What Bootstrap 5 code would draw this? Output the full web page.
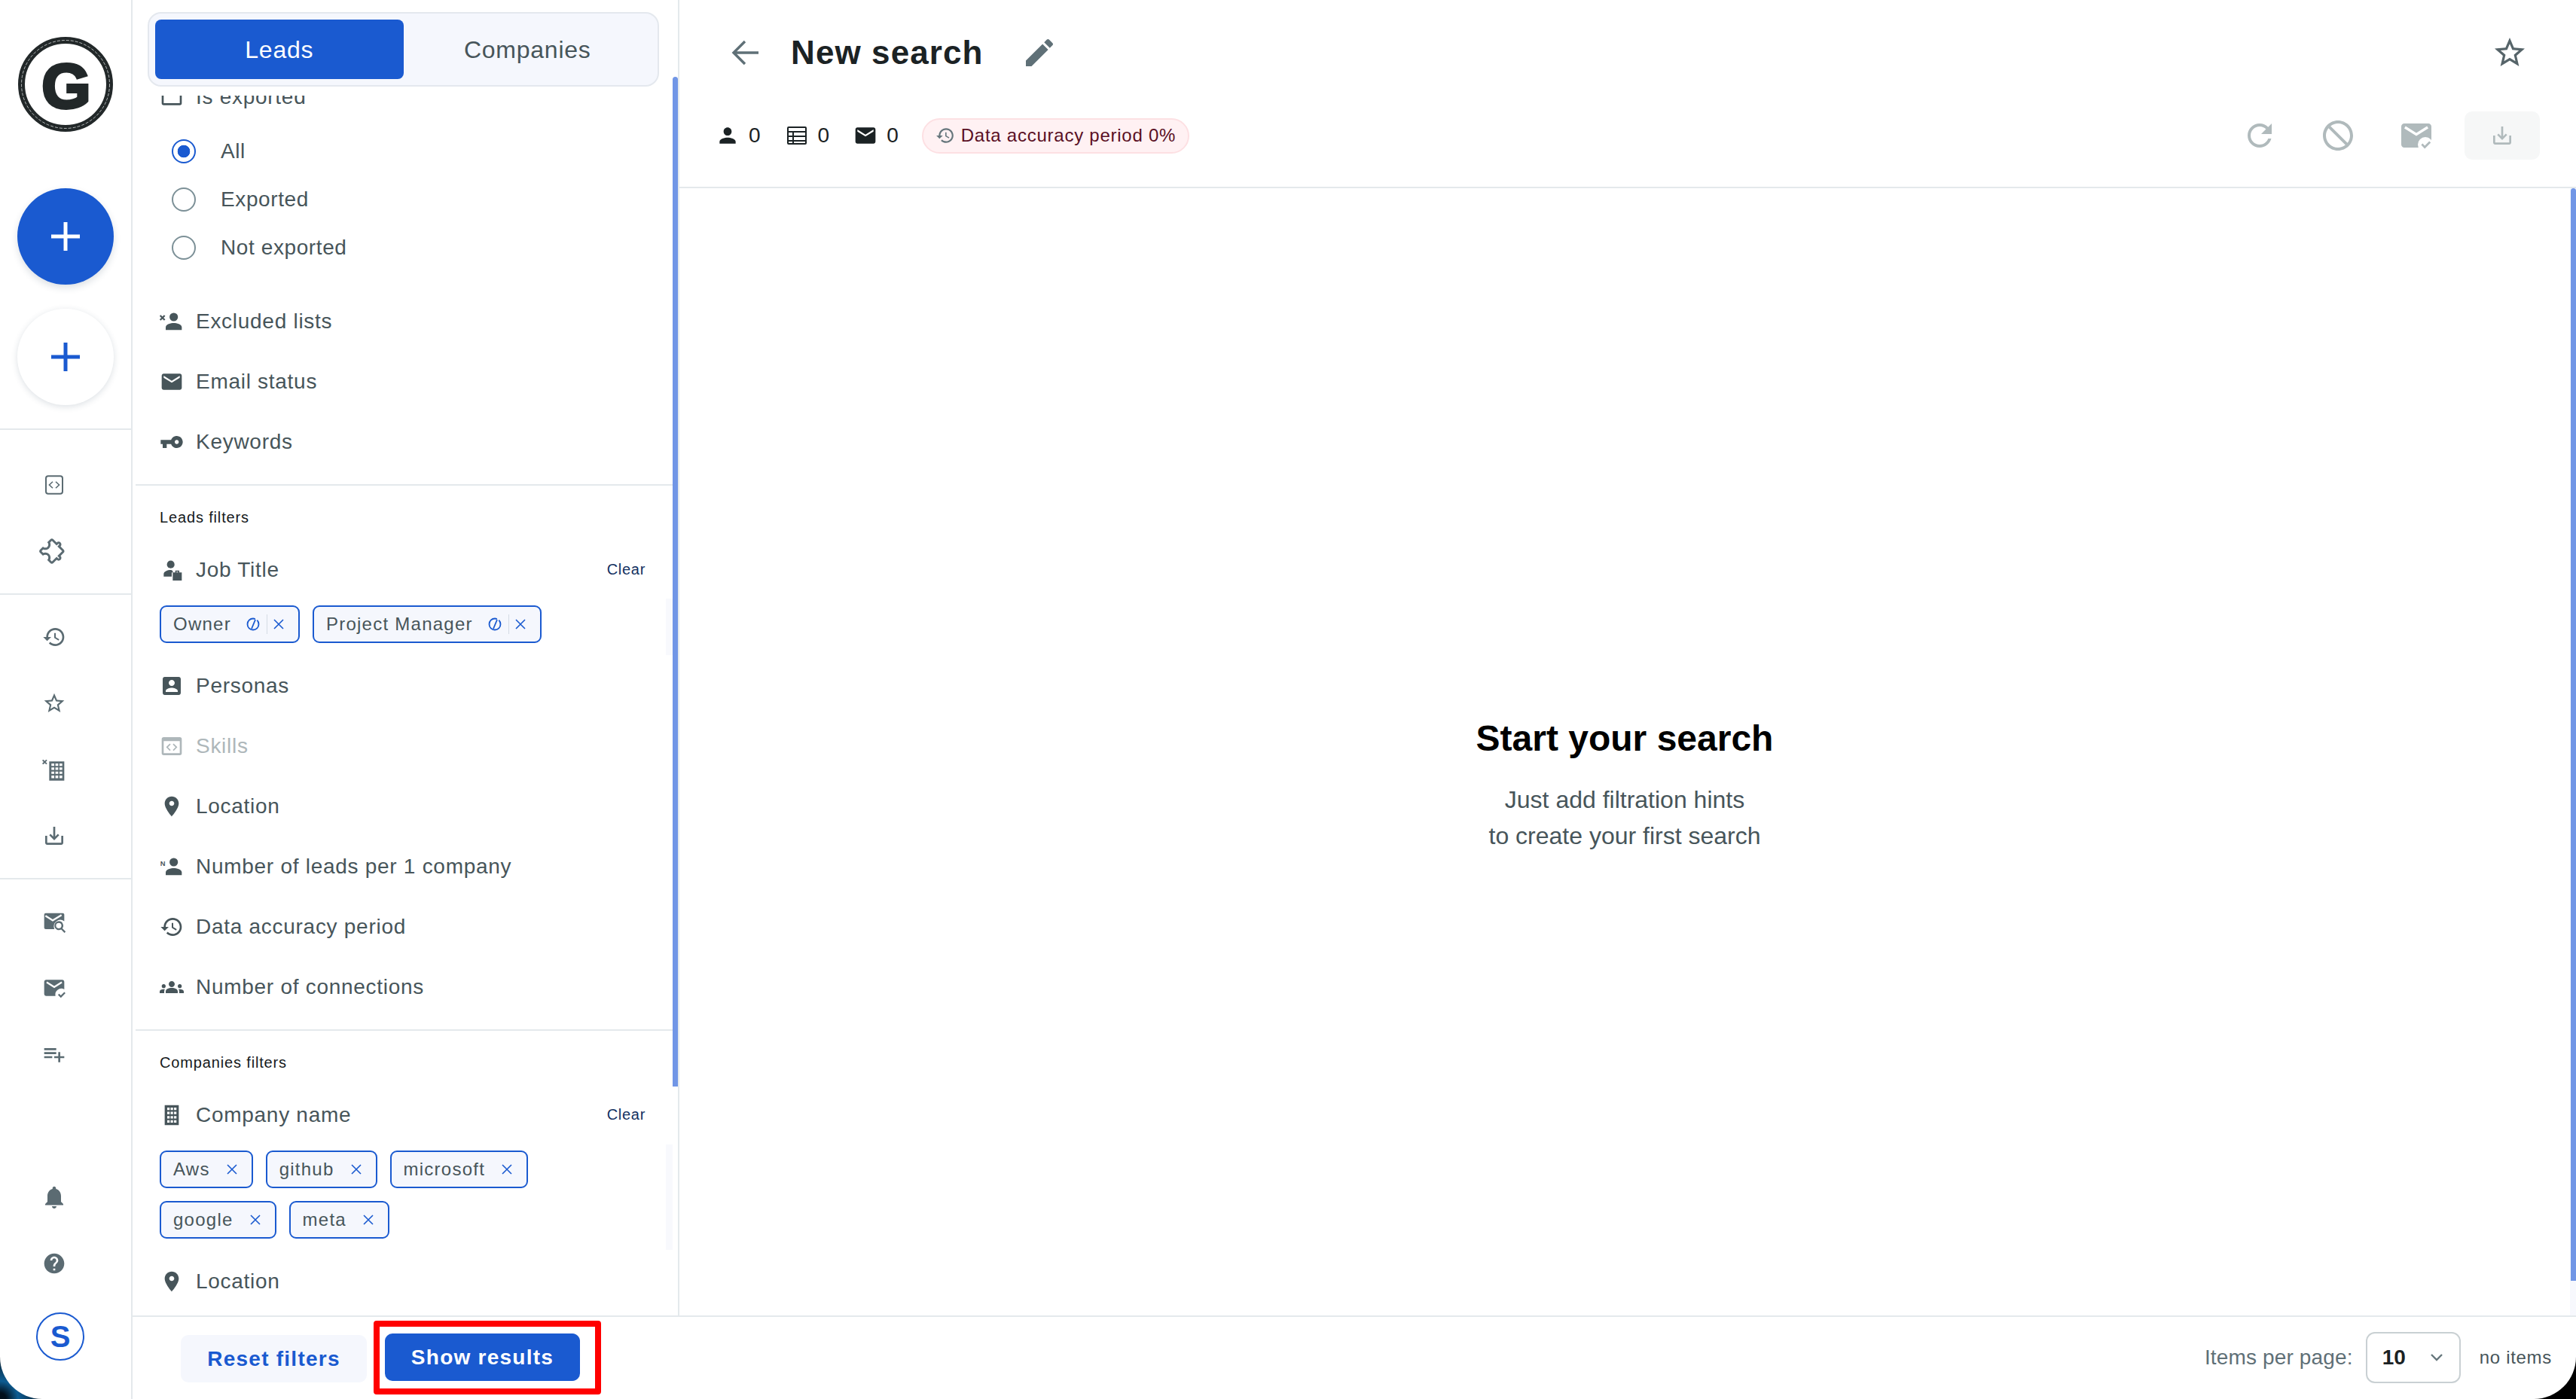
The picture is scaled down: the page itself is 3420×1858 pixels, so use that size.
<!DOCTYPE html>
<html lang="en">
<head>
    <meta charset="UTF-8">
    <meta name="viewport" content="width=device-width, initial-scale=1.0">
    <title>New search</title>
    <link href="https://cdn.jsdelivr.net/npm/bootstrap@5.3.0/dist/css/bootstrap.min.css" rel="stylesheet">
    <style>
        html, body { margin: 0; width: 3420px; height: 1858px; overflow: hidden; }
        body {
            background: radial-gradient(circle at 0 100%, #02101c 0 8px, #0d5c92 24px, #0a3350 44px, #000 60px) 0 100% / 90px 90px no-repeat, #000;
            font-family: "Liberation Sans", Arial, sans-serif;
            color: #47555a;
        }
        .app-shell { width: 3420px; height: 1858px; background: #fff; border-radius: 0 0 56px 56px; overflow: hidden; }

        /* left rail */
        .rail { width: 176px; height: 100%; border-right: 2px solid #e4e9ec; flex: none; }
        .rail-logo { margin: 49px 0 75px 24px; width: 126px; height: 126px; display: block; }
        .fab { width: 128px; height: 128px; margin-left: 23px; border-radius: 50%; border: 0; padding: 0; box-shadow: 0 4px 10px rgba(40, 60, 90, .16); }
        .fab-blue { background: #1a5ad0; color: #fff; margin-bottom: 32px; }
        .fab-white { background: #fff; color: #1a5ad0; margin-bottom: 31px; box-shadow: 0 2px 8px rgba(40, 60, 90, .16); }
        .rail-group { border-top: 2px solid #e4e9ec; padding: 12px 0; }
        .rail-group:first-of-type { padding-top: 29px; }
        .rail-item { height: 88px; padding-left: 56px; display: flex; align-items: center; color: #5b6b72; }
        .rail-item svg { width: 32px; height: 32px; fill: currentColor; overflow: visible; }
        .rail-item svg.bell-icon { width: 36px; height: 36px; margin-left: -2px; }
        .rail-bottom { margin-top: auto; padding-bottom: 51px; }
        .avatar { width: 64px; height: 64px; margin: 21px 0 0 48px; border: 2px solid #1a5ad0; border-radius: 50%; color: #1a5ad0; font-size: 40px; font-weight: 700; letter-spacing: 0; }

        /* filters */
        .workspace { width: 3244px; height: 100%; }
        .top-area { height: 1747px; }
        .filters { width: 724px; flex: none; position: relative; }
        .tabs-head { height: 127px; padding: 16px 25px 0 20px; }
        .tabs-box { height: 99px; background: #f5f7fd; border: 2px solid #e4e8ee; border-radius: 18px; padding: 8px; }
        .tabs-box .nav-link { height: 79px; border-radius: 8px; font-size: 32px; letter-spacing: .75px; color: #47555a; display: flex; align-items: center; justify-content: center; padding: 0; }
        .tabs-box .nav-link.active { background: #1a5ad0; color: #fff; }
        .filter-body { height: 1620px; overflow: hidden; }
        .filter-inner { margin-top: -38px; }
        .f-row { height: 80px; padding-left: 36px; display: flex; align-items: center; font-size: 28px; letter-spacing: .72px; color: #47555a; }
        .f-row svg { width: 32px; height: 32px; fill: currentColor; flex: none; margin-right: 16px; overflow: visible; }
        .f-row.f-off { color: #aeb7ba; }
        .radio-set { padding: 0 0 26px 52px; }
        .radio-line { height: 64px; margin: 0; padding: 0; display: flex; align-items: center; font-size: 28px; letter-spacing: .6px; }
        .radio-line .form-check-input { width: 32px; height: 32px; margin: 0 33px 0 0; float: none; border: 2px solid #7c9097; }
        .radio-line .form-check-input:checked { border-color: #1a5ad0; background-color: #fff; background-image: radial-gradient(circle, #1a5ad0 0 8px, #fff 8.6px); }
        .section-rule { height: 2px; background: #e4e9ec; margin: 16px 7px 0 4px; }
        .section-title { height: 28px; line-height: 28px; margin: 28px 0 16px 36px; font-size: 20px; letter-spacing: .85px; color: #15191b; }
        .clear-link { margin: -3px 43px 0 auto; font-size: 20px; letter-spacing: .7px; color: #12305f; text-decoration: none; }
        .chip-wrap { padding: 7px 60px 17px 36px; gap: 17px; }
        .tag-chip { height: 50px; padding: 0 18px 0 16px; border: 2px solid #1a5ad0; border-radius: 9px; background: #f5f7fd; font-size: 24px; letter-spacing: 1.25px; color: #47555a; display: inline-flex; align-items: center; }
        .tag-chip svg { flex: none; }
        .chip-x { width: 16px; height: 16px; margin-left: 21px; stroke: #1a5ad0; stroke-width: 1.6; fill: none; }
        .chip-sync { width: 18px; height: 20px; margin-left: 20px; stroke: #1a5ad0; stroke-width: 1.8; fill: none; }
        .chip-sep { width: 1px; height: 26px; background: #d5dbe4; margin: 0 -14px 0 9px; }
        .thumb { position: absolute; right: 0; width: 7px; background: #7196e6; border-radius: 4px 4px 0 0; }
        .thumb-left { top: 102px; height: 1341px; }
        .ghost-track { position: absolute; right: 7px; width: 9px; background: #f8f9fd; }

        /* main */
        .result-pane { flex: 1; border-left: 2px solid #e4e9ec; position: relative; }
        .result-head { height: 248px; border-bottom: 2px solid #e4e9ec; padding: 0 48px 0 48px; box-sizing: content-box; }
        .title-line { height: 140px; }
        .title-line h1 { margin: 0 0 0 43px; font-size: 44px; font-weight: 700; letter-spacing: 1.1px; color: #1b2224; }
        .back-arrow { margin-left: 21px; }
        .title-edit { margin-left: 50px; }
        .title-star { margin-right: 16px; }
        .stat-line { height: 80px; padding-top: 0; }
        .stat-item { font-size: 28px; color: #1b2224; letter-spacing: 0; margin-right: 34px; display: flex; align-items: center; }
        .stat-item svg { fill: #1b2224; flex: none; margin-right: 12px; }
        .accuracy-pill { height: 47px; padding: 0 16px 0 16px; background: #fff1f3; border: 2px solid #fde0e3; border-radius: 24px; font-size: 24px; letter-spacing: .75px; color: #5a0f24; display: inline-flex; align-items: center; margin-left: -3px; }
        .accuracy-pill svg { width: 26px; height: 26px; fill: #66767c; margin-right: 8px; }
        .tool-icon { fill: #b0babc; width: 48px; height: 48px; }
        .export-box { width: 100px; height: 64px; background: #f6f7f7; border-radius: 10px; }
        .empty-state { height: 1497px; padding: 90px 8px 0 0; }
        .empty-state h2 { font-size: 48px; font-weight: 700; color: #000; margin: 0 0 29px; letter-spacing: 0; line-height: 56px; }
        .empty-state p { font-size: 32px; line-height: 48px; margin: 0; letter-spacing: 0; color: #47555a; }
        .thumb-main { top: 250px; height: 1451px; }
        .main-track { position: absolute; right: 0; top: 250px; bottom: 0; width: 8px; background: #f7f8fd; }

        /* footer */
        .foot-bar { height: 111px; border-top: 2px solid #e4e9ec; }
        .reset-btn, .show-btn { height: 63px; border: 0; border-radius: 10px; font-size: 28px; font-weight: 700; letter-spacing: 1.25px; padding: 0; }
        .reset-btn { width: 247px; background: #f5f7fd; color: #1a5ad0; margin: 24px 9px 0 64px; }
        .reset-btn:hover { background: #f5f7fd; color: #1a5ad0; }
        .show-btn { width: 259px; background: #1a5ad0; color: #fff; }
        .show-btn:hover { background: #1a5ad0; color: #fff; }
        .red-mark { border: 8px solid #f00; border-radius: 4px; padding: 9px 20px 10px 7px; margin-top: 5px; }
        .per-page { margin: 20px 0 0 auto; padding-right: 32px; }
        .per-label { font-size: 28px; color: #5f7077; letter-spacing: .15px; margin-right: 17px; }
        .per-select { width: 126px; height: 68px; border: 2px solid #c9d0d3; border-radius: 12px; padding: 0 20px; font-size: 28px; font-weight: 700; color: #1b2224; margin-right: 25px; }
        .per-select svg { width: 20px; height: 12px; stroke: #66767c; stroke-width: 2.4; fill: none; }
        .no-items { font-size: 24px; letter-spacing: .7px; color: #47555a; }
    </style>
</head>
<body>
    <svg width="0" height="0" class="d-block position-absolute">
        <defs>
            <symbol id="i-person" viewBox="0 0 24 24"><path d="M12 12c2.21 0 4-1.79 4-4s-1.79-4-4-4-4 1.79-4 4 1.79 4 4 4zm0 2c-2.67 0-8 1.34-8 4v2h16v-2c0-2.66-5.33-4-8-4z"/></symbol>
            <symbol id="i-mail" viewBox="0 0 24 24"><path d="M20 4H4c-1.1 0-1.99.9-1.99 2L2 18c0 1.1.9 2 2 2h16c1.1 0 2-.9 2-2V6c0-1.1-.9-2-2-2zm0 4l-8 5-8-5V6l8 5 8-5v2z"/></symbol>
            <symbol id="i-history" viewBox="0 0 24 24"><path d="M13 3c-4.97 0-9 4.03-9 9H1l3.89 3.89.07.14L9 12H6c0-3.87 3.13-7 7-7s7 3.13 7 7-3.13 7-7 7c-1.93 0-3.68-.79-4.94-2.06l-1.42 1.42C8.27 19.99 10.51 21 13 21c4.97 0 9-4.03 9-9s-4.03-9-9-9zm-1 5v5l4.28 2.54.72-1.21-3.5-2.08V8H12z"/></symbol>
            <symbol id="i-star" viewBox="0 0 24 24"><path d="M22 9.24l-7.19-.62L12 2 9.19 8.63 2 9.24l5.46 4.73L5.82 21 12 17.27 18.18 21l-1.63-7.03L22 9.24zM12 15.4l-3.76 2.27 1-4.28-3.32-2.88 4.38-.38L12 6.1l1.71 4.04 4.38.38-3.32 2.88 1 4.28L12 15.4z"/></symbol>
            <symbol id="i-save" viewBox="0 0 24 24"><path d="M19 12v7H5v-7H3v7c0 1.1.9 2 2 2h14c1.1 0 2-.9 2-2v-7h-2zm-6 .67l2.59-2.58L17 11.5l-5 5-5-5 1.41-1.41L11 12.67V3h2z"/></symbol>
            <symbol id="i-place" viewBox="0 0 24 24"><path d="M12 2C8.13 2 5 5.13 5 9c0 5.25 7 13 7 13s7-7.75 7-13c0-3.87-3.13-7-7-7zm0 9.5c-1.38 0-2.5-1.12-2.5-2.5s1.12-2.5 2.5-2.5 2.5 1.12 2.5 2.5-1.12 2.5-2.5 2.5z"/></symbol>
            <symbol id="i-close" viewBox="0 0 16 16"><path d="M2 2l12 12M14 2L2 14"/></symbol>
            <symbol id="i-sync" viewBox="0 0 18 20"><circle cx="9" cy="10" r="7.5" stroke-dasharray="38 3"/><path d="M12 4l-5 12"/></symbol>
            <symbol id="i-chev" viewBox="0 0 20 12"><path d="M3 2l7 7 7-7"/></symbol>
            <symbol id="i-plus" viewBox="0 0 40 40"><path d="M20 1v38M1 20h38" stroke="currentColor" stroke-width="5" fill="none"/></symbol>
        </defs>
    </svg>

    <div class="app-shell d-flex">
        <aside class="rail d-flex flex-column">
            <svg class="rail-logo" viewBox="0 0 126 126">
                <circle cx="63" cy="63" r="58.5" fill="#fff" stroke="#222829" stroke-width="9"/>
                <circle cx="63" cy="63" r="58.5" fill="none" stroke="#d8dcdc" stroke-width=".8" stroke-dasharray="4 2"/>
                <text x="64" y="94" text-anchor="middle" font-family="Liberation Sans" font-weight="700" font-size="84" fill="#222829" stroke="#222829" stroke-width="4">G</text>
            </svg>
            <button type="button" class="fab fab-blue btn d-flex align-items-center justify-content-center"><svg width="40" height="40"><use href="#i-plus"/></svg></button>
            <button type="button" class="fab fab-white btn d-flex align-items-center justify-content-center"><svg width="40" height="40"><use href="#i-plus"/></svg></button>

            <div class="rail-group">
                <div class="rail-item"><svg viewBox="0 0 24 24"><path fill-rule="evenodd" d="M6 2.500h12a3 3 0 0 1 3 3v13a3 3 0 0 1-3 3H6a3 3 0 0 1-3-3v-13a3 3 0 0 1 3-3zm0 1.500A1.500 1.500 0 0 0 4.500 5.500v13A1.500 1.500 0 0 0 6 20h12a1.500 1.500 0 0 0 1.500-1.500v-13A1.500 1.500 0 0 0 18 4z"/><path d="M10.500 8.800l-3.400 3.200 3.400 3.200" fill="none" stroke="currentColor" stroke-width="1.200"/><path d="M13.500 8.800l3.400 3.200-3.400 3.200" fill="none" stroke="currentColor" stroke-width="1.200"/></svg></div>
                <div class="rail-item"><svg viewBox="0 0 24 24"><g transform="rotate(45 12 12) translate(12 12) scale(1.12) translate(-12 -12)"><path d="M10.500 4.500c.28 0 .5.22.5.5v2h6v6h2c.28 0 .5.22.5.5s-.22.5-.5.5h-2v6h-2.120c-.68-1.750-2.390-3-4.380-3s-3.700 1.250-4.380 3H4v-2.120c1.750-.68 3-2.390 3-4.380 0-1.990-1.240-3.700-2.990-4.380L4 7h6V5c0-.28.22-.5.5-.5m0-2C9.120 2.500 8 3.620 8 5H4c-1.100 0-1.990.9-1.990 2v3.800h.29c1.490 0 2.700 1.210 2.700 2.700s-1.210 2.700-2.700 2.700H2V20c0 1.100.9 2 2 2h3.800v-.3c0-1.490 1.210-2.700 2.700-2.700s2.700 1.210 2.700 2.700v.3H17c1.100 0 2-.9 2-2v-4c1.380 0 2.500-1.120 2.500-2.500S20.380 11 19 11V7c0-1.100-.9-2-2-2h-4c0-1.380-1.120-2.500-2.500-2.500z"/></g></svg></div>
            </div>
            <div class="rail-group">
                <div class="rail-item"><svg><use href="#i-history"/></svg></div>
                <div class="rail-item"><svg><use href="#i-star"/></svg></div>
                <div class="rail-item"><svg viewBox="0 0 24 24"><path fill-rule="evenodd" d="M7 4h15v19H7zm2.200 2v2.400h2.800V6zm4 0v2.400h2.800V6zm4 0v2.400h2.800V6zM9.200 10v2.400h2.800V10zm4 0v2.400h2.800V10zm4 0v2.400h2.800V10zM9.200 14v2.400h2.800V14zm4 0v2.400h2.800V14zm4 0v2.400h2.800V14zM9.200 18v2.600h2.800V18zm4 0v2.600h2.800V18zm4 0v2.600h2.800V18z"/><path d="M.5 2.500l4 4m0-4l-4 4" fill="none" stroke="currentColor" stroke-width="1.500"/></svg></div>
                <div class="rail-item"><svg><use href="#i-save"/></svg></div>
            </div>
            <div class="rail-group border-bottom-0">
                <div class="rail-item"><svg viewBox="0 0 24 24"><path d="M3.500 3.500h17c.8 0 1.500.7 1.500 1.500v6.600a6.500 6.500 0 0 0-9.800 7.900H3.500c-.8 0-1.500-.7-1.500-1.500V5c0-.8.7-1.500 1.500-1.500zM2.800 7l7.700 4.800 9.200-5.600-.9-1.500-8.300 5-6.800-4.200z"/><path fill-rule="evenodd" d="M16.500 11.500a4.500 4.500 0 0 1 3.600 7.200l3.300 3.300-1.200 1.200-3.300-3.300a4.500 4.500 0 1 1-2.400-8.400zm0 1.800a2.700 2.700 0 1 0 0 5.400 2.700 2.700 0 0 0 0-5.400z"/></svg></div>
                <div class="rail-item"><svg viewBox="0 0 24 24"><path d="M4 4h16c1.100 0 2 .9 2 2v7.500a6 6 0 0 0-8.800 6.500H4c-1.100 0-2-.9-2-2V6c0-1.100.9-2 2-2zm0 3.200l8 5 8-5-.9-1.500-7.100 4.500-7.100-4.500z"/><path d="M15.700 19l1.200-1.200 1.700 1.700 3.400-3.400 1.200 1.200-4.600 4.600z"/></svg></div>
                <div class="rail-item"><svg viewBox="0 0 24 24"><path d="M14 10H2v2h12v-2zm0-4H2v2h12V6zm4 8v-4h-2v4h-4v2h4v4h2v-4h4v-2h-4zM2 16h8v-2H2v2z"/></svg></div>
            </div>

            <div class="rail-bottom">
                <div class="rail-item"><svg class="bell-icon" viewBox="0 0 24 24"><path d="M12 22c1.100 0 2-.9 2-2h-4c0 1.100.89 2 2 2zm6-6v-5c0-3.070-1.640-5.640-4.500-6.320V4c0-.83-.67-1.500-1.500-1.500s-1.500.67-1.500 1.500v.68C7.630 5.360 6 7.920 6 11v5l-2 2v1h16v-1l-2-2z"/></svg></div>
                <div class="rail-item"><svg viewBox="0 0 24 24"><path d="M12 2C6.480 2 2 6.480 2 12s4.480 10 10 10 10-4.480 10-10S17.520 2 12 2zm1 17h-2v-2h2v2zm2.070-7.750l-.9.92C13.450 12.900 13 13.500 13 15h-2v-.5c0-1.100.45-2.100 1.170-2.830l1.240-1.260c.37-.36.59-.86.59-1.410 0-1.100-.9-2-2-2s-2 .9-2 2H8c0-2.210 1.790-4 4-4s4 1.790 4 4c0 .88-.36 1.680-.93 2.250z"/></svg></div>
                <div class="avatar d-flex align-items-center justify-content-center">S</div>
            </div>
        </aside>

        <div class="workspace d-flex flex-column">
            <div class="top-area d-flex">
                <section class="filters">
                    <div class="tabs-head">
                        <ul class="tabs-box nav nav-pills nav-justified flex-nowrap">
                            <li class="nav-item"><a class="nav-link active" href="#">Leads</a></li>
                            <li class="nav-item"><a class="nav-link" href="#">Companies</a></li>
                        </ul>
                    </div>
                    <div class="filter-body">
                        <div class="filter-inner">
                            <div class="f-row"><svg viewBox="0 0 24 24"><path fill-rule="evenodd" d="M4 4h16a2 2 0 0 1 2 2v12a2 2 0 0 1-2 2H4a2 2 0 0 1-2-2V6a2 2 0 0 1 2-2zm0 2v12h16V6z"/></svg>Is exported</div>
                            <div class="radio-set">
                                <label class="form-check radio-line"><input class="form-check-input" type="radio" name="exported" checked>All</label>
                                <label class="form-check radio-line"><input class="form-check-input" type="radio" name="exported">Exported</label>
                                <label class="form-check radio-line"><input class="form-check-input" type="radio" name="exported">Not exported</label>
                            </div>
                            <div class="f-row"><svg viewBox="0 0 24 24"><circle cx="14" cy="7.500" r="4.200"/><path d="M14 13.500c-2.800 0-8 1.300-8 4.100V20.500h16v-2.900c0-2.800-5.200-4.100-8-4.100z"/><path d="M.5 6l4.500 4.500m0-4.500l-4.500 4.500" fill="none" stroke="currentColor" stroke-width="1.700"/></svg>Excluded lists</div>
                            <div class="f-row"><svg><use href="#i-mail"/></svg>Email status</div>
                            <div class="f-row"><svg viewBox="0 0 24 24"><g transform="matrix(-1 0 0 1 24 0)"><path d="M12.650 10C11.830 7.670 9.610 6 7 6c-3.310 0-6 2.690-6 6s2.690 6 6 6c2.610 0 4.830-1.670 5.650-4H17v4h4v-4h2v-4H12.650zM7 14c-1.100 0-2-.9-2-2s.9-2 2-2 2 .9 2 2-.9 2-2 2z"/></g></svg>Keywords</div>
                            <div class="section-rule"></div>

                            <div class="section-title">Leads filters</div>
                            <div class="f-row"><svg viewBox="0 0 24 24"><circle cx="11" cy="6.500" r="3.800"/><path d="M11 12c-3.300 0-7 1.500-7 4v2.500h8V14.500h1.500c-.6-1.600-.9-2.500-2.500-2.500z"/><path fill-rule="evenodd" d="M15.500 12.500h4v2H22v8h-9v-8h2.500zm1.200 1.200v.8h1.600v-.8z"/></svg>Job Title<a class="clear-link" href="#">Clear</a></div>
                            <div class="chip-wrap d-flex flex-wrap">
                                <span class="tag-chip">Owner<svg class="chip-sync"><use href="#i-sync"/></svg><span class="chip-sep"></span><svg class="chip-x"><use href="#i-close"/></svg></span>
                                <span class="tag-chip">Project Manager<svg class="chip-sync"><use href="#i-sync"/></svg><span class="chip-sep"></span><svg class="chip-x"><use href="#i-close"/></svg></span>
                            </div>
                            <div class="f-row"><svg viewBox="0 0 24 24"><path d="M19 3H5c-1.110 0-2 .9-2 2v14c0 1.100.89 2 2 2h14c1.100 0 2-.9 2-2V5c0-1.100-.9-2-2-2zm-7 3c1.650 0 3 1.350 3 3s-1.350 3-3 3-3-1.350-3-3 1.350-3 3-3zm6 12H6v-1c0-2 4-3.100 6-3.100s6 1.100 6 3.100v1z"/></svg>Personas</div>
                            <div class="f-row f-off"><svg viewBox="0 0 24 24"><path fill-rule="evenodd" d="M4 3h16a2 2 0 0 1 2 2v14a2 2 0 0 1-2 2H4a2 2 0 0 1-2-2V5a2 2 0 0 1 2-2zm0 4v12h16V7z"/><path d="M10.500 9.800l-3.200 3.200 3.200 3.200M13.500 9.800l3.200 3.200-3.200 3.200" fill="none" stroke="currentColor" stroke-width="1.300"/></svg>Skills</div>
                            <div class="f-row"><svg><use href="#i-place"/></svg>Location</div>
                            <div class="f-row"><svg viewBox="0 0 24 24"><circle cx="14" cy="7.500" r="4.200"/><path d="M14 13.500c-2.800 0-8 1.300-8 4.100V20.500h16v-2.900c0-2.800-5.200-4.100-8-4.100z"/><text x="0.500" y="11" font-family="Liberation Sans" font-weight="700" font-size="7" letter-spacing="0">N</text></svg>Number of leads per 1 company</div>
                            <div class="f-row"><svg><use href="#i-history"/></svg>Data accuracy period</div>
                            <div class="f-row"><svg viewBox="0 0 24 24"><path d="M12 12.750c1.630 0 3.070.39 4.240.9 1.080.48 1.760 1.560 1.760 2.730V18H6v-1.610c0-1.180.68-2.260 1.760-2.730 1.170-.52 2.610-.91 4.240-.91zM4 13c1.100 0 2-.9 2-2s-.9-2-2-2-2 .9-2 2 .9 2 2 2zm1.130 1.100c-.37-.06-.74-.1-1.130-.1-.99 0-1.930.21-2.780.58C.48 14.900 0 15.620 0 16.430V18h4.500v-1.610c0-.83.23-1.610.63-2.290zM20 13c1.100 0 2-.9 2-2s-.9-2-2-2-2 .9-2 2 .9 2 2 2zm4 3.430c0-.81-.48-1.530-1.220-1.850-.85-.37-1.790-.58-2.780-.58-.39 0-.76.04-1.130.1.4.68.63 1.460.63 2.290V18H24v-1.570zM12 6c1.660 0 3 1.340 3 3s-1.340 3-3 3-3-1.340-3-3 1.340-3 3-3z"/></svg>Number of connections</div>
                            <div class="section-rule"></div>

                            <div class="section-title">Companies filters</div>
                            <div class="f-row"><svg viewBox="0 0 24 24"><path fill-rule="evenodd" d="M5 2h14v20H5zm2.500 2.500v2.400h2.400V4.500zm3.400 0v2.400h2.400V4.500zm3.400 0v2.400h2.400V4.500zM7.500 8.700v2.400h2.400V8.700zm3.400 0v2.400h2.400V8.700zm3.400 0v2.400h2.400V8.700zM7.500 12.900v2.400h2.400v-2.400zm3.400 0v2.400h2.400v-2.400zm3.400 0v2.400h2.400v-2.400zM7.500 17.100v2.400h2.400v-2.400zm3.400 0v2.400h2.400v-2.400zm3.400 0v2.400h2.400v-2.400z"/></svg>Company name<a class="clear-link" href="#">Clear</a></div>
                            <div class="chip-wrap d-flex flex-wrap">
                                <span class="tag-chip">Aws<svg class="chip-x"><use href="#i-close"/></svg></span>
                                <span class="tag-chip">github<svg class="chip-x"><use href="#i-close"/></svg></span>
                                <span class="tag-chip">microsoft<svg class="chip-x"><use href="#i-close"/></svg></span>
                                <span class="tag-chip">google<svg class="chip-x"><use href="#i-close"/></svg></span>
                                <span class="tag-chip">meta<svg class="chip-x"><use href="#i-close"/></svg></span>
                            </div>
                            <div class="f-row"><svg><use href="#i-place"/></svg>Location</div>
                        </div>
                    </div>
                    <span class="ghost-track" style="top:795px;height:75px"></span>
                    <span class="ghost-track" style="top:1520px;height:140px"></span>
                    <span class="thumb thumb-left"></span>
                </section>

                <main class="result-pane">
                    <div class="result-head">
                        <div class="title-line d-flex align-items-center">
                            <svg class="back-arrow" width="36" height="34" viewBox="0 0 36 34" fill="none" stroke="#5f7077" stroke-width="3.400"><path d="M36 17H4M18 2L3 17l15 15"/></svg>
                            <h1>New search</h1>
                            <svg class="title-edit" width="48" height="48" viewBox="0 0 24 24" fill="#5f7077"><path d="M3 17.250V21h3.750L17.810 9.940l-3.750-3.750L3 17.250zM20.710 7.040c.39-.39.39-1.020 0-1.410l-2.340-2.340c-.39-.39-1.020-.39-1.410 0l-1.830 1.830 3.750 3.750 1.830-1.830z"/></svg>
                            <svg class="title-star ms-auto" width="48" height="48" viewBox="0 0 24 24" fill="#566469"><use href="#i-star"/></svg>
                        </div>
                        <div class="stat-line d-flex align-items-center">
                            <span class="stat-item"><svg width="32" height="32"><use href="#i-person"/></svg>0</span>
                            <span class="stat-item"><svg width="28" height="28" viewBox="0 0 28 28" style="margin-right:14px"><path fill-rule="evenodd" d="M3 2h22a2 2 0 0 1 2 2v20a2 2 0 0 1-2 2H3a2 2 0 0 1-2-2V4a2 2 0 0 1 2-2zm0 2v4h22V4zm0 6v4h5v-4zm7 0v4h15v-4zM3 16v4h5v-4zm7 0v4h15v-4zM3 22v2h5v-2zm7 0v2h15v-2z"/></svg>0</span>
                            <span class="stat-item"><svg width="32" height="32" style="margin-left:-2px"><use href="#i-mail"/></svg>0</span>
                            <span class="accuracy-pill"><svg><use href="#i-history"/></svg>Data accuracy period 0%</span>
                            <div class="ms-auto d-flex align-items-center">
                                <svg class="tool-icon" viewBox="0 0 24 24"><path d="M17.650 6.350C16.200 4.900 14.210 4 12 4c-4.420 0-7.990 3.580-7.990 8s3.570 8 7.990 8c3.730 0 6.840-2.550 7.730-6h-2.080c-.82 2.330-3.040 4-5.650 4-3.310 0-6-2.690-6-6s2.690-6 6-6c1.660 0 3.140.69 4.220 1.780L13 11h7V4l-2.350 2.350z"/></svg>
                                <svg class="tool-icon" style="margin-left:56px" viewBox="0 0 24 24"><g transform="matrix(-1 0 0 1 24 0)"><path d="M12 2C6.480 2 2 6.480 2 12s4.480 10 10 10 10-4.480 10-10S17.520 2 12 2zM4 12c0-4.420 3.580-8 8-8 1.850 0 3.550.63 4.900 1.690L5.690 16.900C4.630 15.550 4 13.850 4 12zm8 8c-1.850 0-3.550-.63-4.900-1.690L18.310 7.100C19.370 8.450 20 10.150 20 12c0 4.420-3.580 8-8 8z"/></g></svg>
                                <svg class="tool-icon" style="margin-left:56px" viewBox="0 0 24 24"><path d="M4 4h16c1.100 0 2 .9 2 2v10h-8v4H4c-1.100 0-2-.9-2-2V6c0-1.100.9-2 2-2zm0 3.200l8 5 8-5-.9-1.500-7.100 4.500-7.100-4.500z"/><circle cx="18" cy="18" r="5" fill="#fff"/><path d="M15.200 18.300l1-1 1.400 1.400 3-3 1 1-4 4z"/></svg>
                                <div class="export-box d-flex align-items-center justify-content-center" style="margin-left:40px">
                                    <svg class="tool-icon" viewBox="0 0 48 48" style="width:32px;height:32px"><use href="#i-save"/></svg>
                                </div>
                            </div>
                        </div>
                    </div>
                    <div class="empty-state d-flex flex-column align-items-center justify-content-center text-center">
                        <h2>Start your search</h2>
                        <p>Just add filtration hints<br>to create your first search</p>
                    </div>
                    <span class="main-track"></span>
                    <span class="thumb thumb-main"></span>
                </main>
            </div>

            <footer class="foot-bar d-flex align-items-start">
                <button type="button" class="btn reset-btn">Reset filters</button>
                <div class="red-mark d-flex">
                    <button type="button" class="btn show-btn">Show results</button>
                </div>
                <div class="per-page d-flex align-items-center">
                    <span class="per-label">Items per page:</span>
                    <div class="per-select d-flex align-items-center justify-content-between">10<svg><use href="#i-chev"/></svg></div>
                    <span class="no-items">no items</span>
                </div>
            </footer>
        </div>
    </div>
    <script src="https://cdn.jsdelivr.net/npm/bootstrap@5.3.0/dist/js/bootstrap.bundle.min.js"></script>
</body>
</html>
